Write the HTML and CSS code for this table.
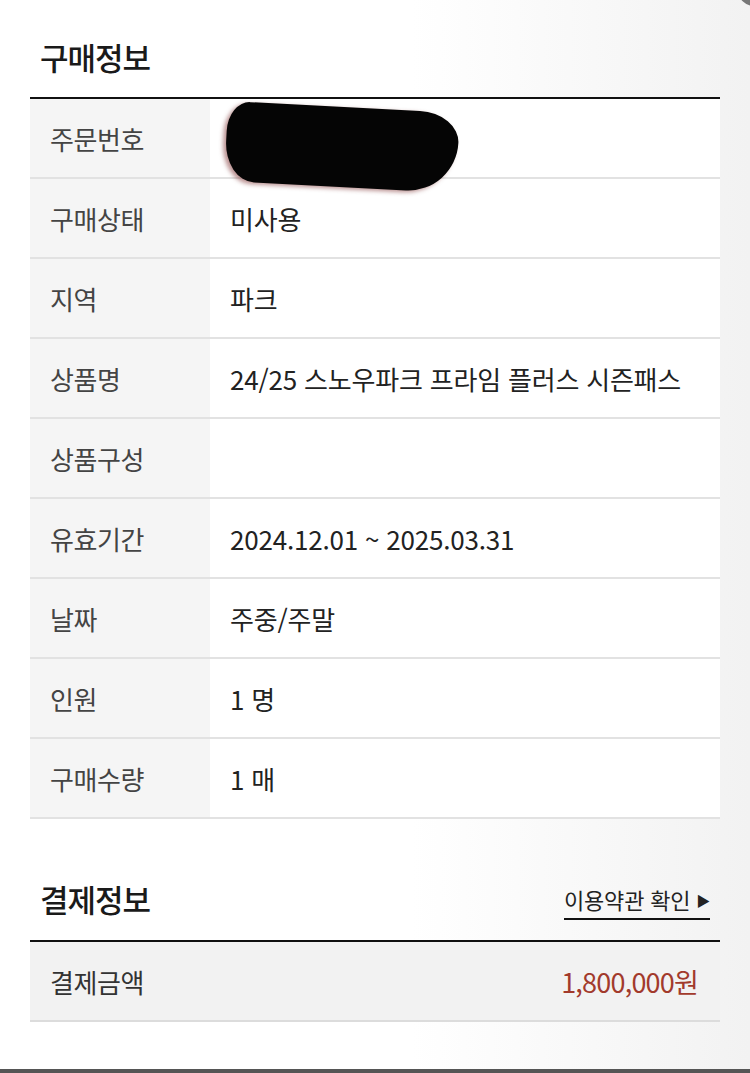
FILE: index.html
```html
<!DOCTYPE html>
<html lang="ko">
<head>
<meta charset="utf-8">
<link rel="stylesheet" href="styles.css">
</head>
<body>
<div class="corner"></div>
<main class="page">
  <section class="block">
    <div class="head">
      <h2 class="title">구매정보</h2>
    </div>
    <div class="table">
      <div class="row">
        <div class="label">주문번호</div>
        <div class="value value-redacted"><span class="redact"></span></div>
      </div>
      <div class="row">
        <div class="label">구매상태</div>
        <div class="value">미사용</div>
      </div>
      <div class="row">
        <div class="label">지역</div>
        <div class="value">파크</div>
      </div>
      <div class="row">
        <div class="label">상품명</div>
        <div class="value">24/25 스노우파크 프라임 플러스 시즌패스</div>
      </div>
      <div class="row">
        <div class="label">상품구성</div>
        <div class="value"></div>
      </div>
      <div class="row">
        <div class="label">유효기간</div>
        <div class="value">2024.12.01 ~ 2025.03.31</div>
      </div>
      <div class="row">
        <div class="label">날짜</div>
        <div class="value">주중/주말</div>
      </div>
      <div class="row">
        <div class="label">인원</div>
        <div class="value">1 명</div>
      </div>
      <div class="row">
        <div class="label">구매수량</div>
        <div class="value">1 매</div>
      </div>
    </div>
  </section>

  <section class="block pay">
    <div class="head head-pay">
      <h2 class="title">결제정보</h2>
      <a class="terms">이용약관 확인 <span class="arrow">&#9654;</span></a>
    </div>
    <div class="pay-row">
      <div class="pay-label">결제금액</div>
      <div class="price">1,800,000원</div>
    </div>
  </section>
</main>
<div class="bottom-bar"></div>
</body>
</html>
```

FILE: styles.css
```css
* { box-sizing: border-box; }
html, body { margin: 0; padding: 0; }
body {
  width: 750px;
  height: 1073px;
  overflow: hidden;
  position: relative;
  background: linear-gradient(90deg, #ffffff 0%, #ffffff 55%, #f2f2f2 100%);
  font-family: "Noto Sans CJK KR", "Noto Sans", sans-serif;
  color: #222;
}
.page { padding: 0 30px; }
.head { padding: 37px 0 20px 10px; border-bottom: 2px solid #111; }
.title { margin: 0; font-size: 31px; line-height: 40px; font-weight: 500; color: #1a1a1a; letter-spacing: -1px; }
.row { display: flex; height: 80px; border-bottom: 2px solid #e2e2e2; }
.label {
  width: 180px;
  background: #f5f5f5;
  padding-left: 20px;
  display: flex;
  align-items: center;
  font-size: 26px;
  color: #444;
  letter-spacing: -0.4px;
}
.value {
  flex: 1;
  background: #fff;
  padding-left: 20px;
  display: flex;
  align-items: center;
  font-size: 26px;
  color: #222;
  letter-spacing: -0.2px;
}
.value-redacted { position: relative; }
.redact {
  position: absolute;
  left: 16px;
  top: 8px;
  width: 232px;
  height: 80px;
  background: #050505;
  border-radius: 22px 40px 50px 30px / 30px 30px 50px 40px;
  transform: rotate(3deg);
  box-shadow: -3px 2px 4px rgba(120, 40, 40, 0.5);
  z-index: 2;
}
.pay { margin-top: 21px; }
.head-pay { display: flex; justify-content: space-between; align-items: center; }
.terms {
  font-size: 22px;
  line-height: 28px;
  color: #222;
  padding-bottom: 4px;
  border-bottom: 2px solid #111;
  margin-right: 10px;
  margin-top: 8px;
  letter-spacing: -0.2px;
}
.arrow { font-size: 14px; vertical-align: 3px; }
.pay-row {
  display: flex;
  justify-content: space-between;
  align-items: center;
  height: 80px;
  background: #f2f2f2;
  border-bottom: 2px solid #dcdcdc;
  padding: 0 22px 0 20px;
}
.pay-label { font-size: 26px; color: #333; letter-spacing: -0.4px; }
.price { font-size: 27px; color: #a23a2c; letter-spacing: -0.8px; }
.corner {
  position: absolute;
  right: -20px;
  top: -26px;
  width: 32px;
  height: 32px;
  border-radius: 50%;
  background: #777;
}
.bottom-bar {
  position: absolute;
  left: 0;
  right: 0;
  bottom: 0;
  height: 4px;
  background: #555;
}
```
